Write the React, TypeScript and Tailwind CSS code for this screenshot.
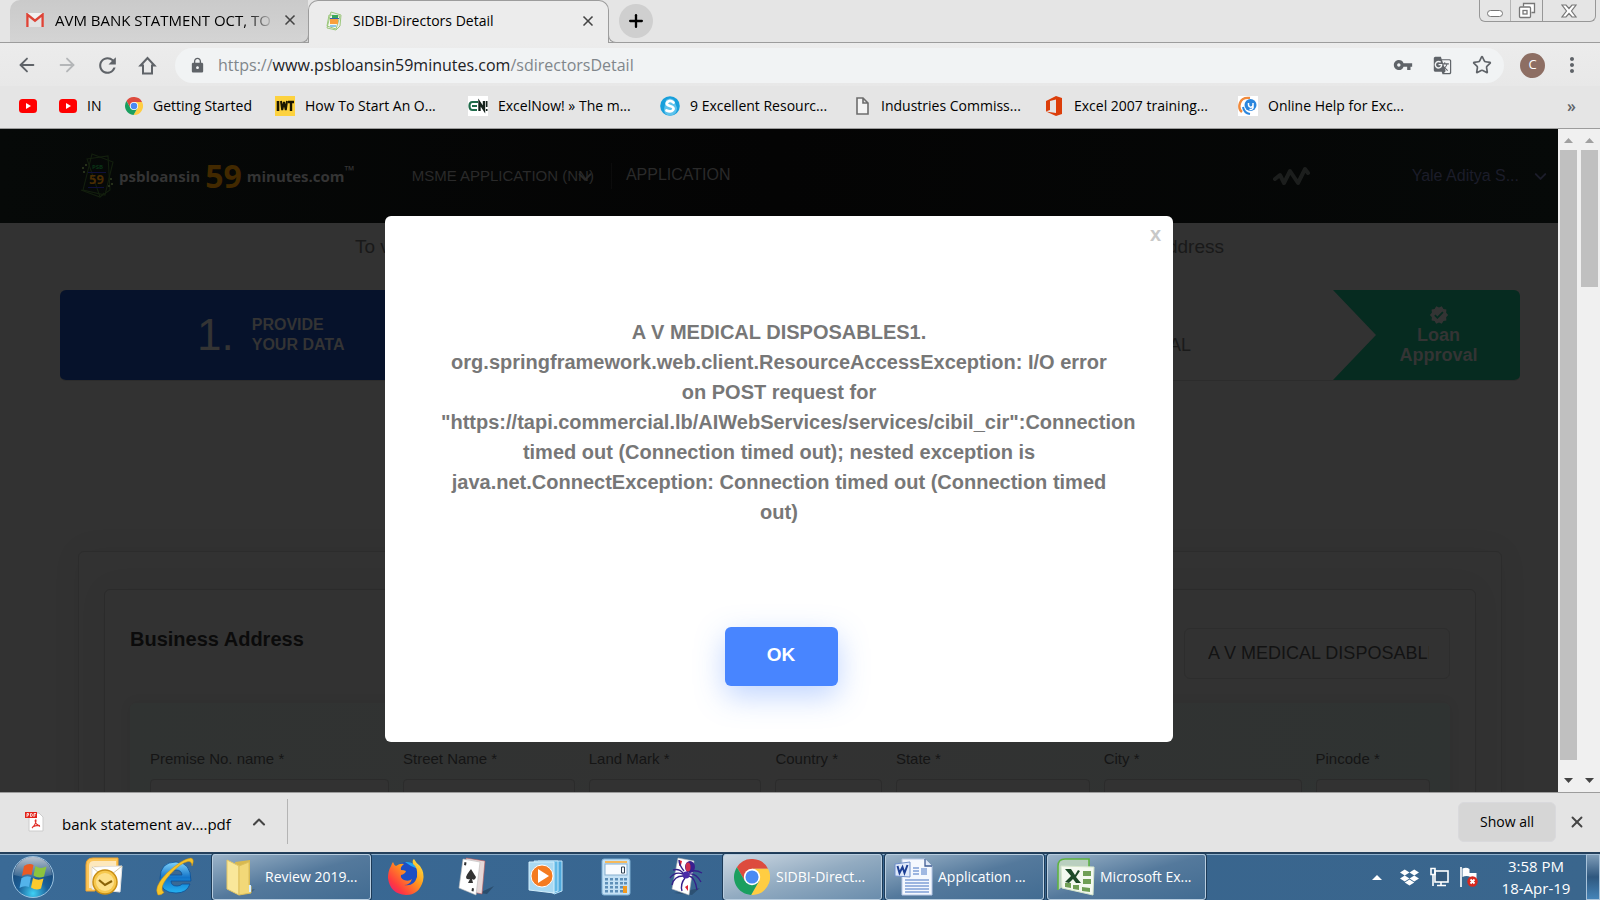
import React, { useState } from "react";
import { X, Plus, ArrowLeft, ArrowRight, ChevronDown, ChevronUp, Star } from "lucide-react";
import { MdVpnKey, MdLock, MdMoreVert, MdRefresh, MdGTranslate, MdVerified } from "react-icons/md";
import { FaDropbox } from "react-icons/fa";

const ui = "font-['Open_Sans','Noto_Sans',sans-serif]";
const arial = "font-['Liberation_Sans',Arial,sans-serif]";

function ChromeLogo({ size }: { size: number }) {
  return (
    <svg width={size} height={size} viewBox="2 2 44 44" aria-hidden="true">
      <path fill="#dd4b3e" d="M24 14H43.6A22 22 0 0 0 5.54 12.03L15.34 29Z" />
      <path fill="#ffcd42" d="M32.66 29L22.86 45.97A22 22 0 0 0 43.6 14H24Z" />
      <path fill="#1a9f5f" d="M15.34 29L5.54 12.03A22 22 0 0 0 22.86 45.97L32.66 29Z" />
      <circle cx="24" cy="24" r="10" fill="#fff" />
      <circle cx="24" cy="24" r="8" fill="#4a8af4" />
    </svg>
  );
}

function YouTubeIcon() {
  return (
    <svg width="18" height="18" viewBox="0 0 18 18" aria-hidden="true">
      <rect y="2" width="18" height="14" rx="3.5" fill="#f00" />
      <path d="M7 6l5 3-5 3z" fill="#fff" />
    </svg>
  );
}

function GmailIcon() {
  return (
    <svg width="18" height="14" viewBox="0 0 18 14" aria-hidden="true">
      <rect width="18" height="14" rx="1.5" fill="#f1f1f1" />
      <path d="M3 14V4l6 5 6-5v10" fill="#e3e3e3" />
      <path d="M1.4 14V1.6L9 7.6l7.6-6V14" fill="none" stroke="#dc4437" strokeWidth="2.4" />
    </svg>
  );
}

function PsbIcon() {
  return (
    <svg width="18" height="20" viewBox="0 0 18 20" aria-hidden="true">
      <path d="M4 4l11 1-4 13-9-3z" fill="#f4f8ee" stroke="#9cc77c" />
      <path d="M6 1l10 3-1 11-4 4-9-2z" fill="none" stroke="#9cc77c" />
      <rect x="7" y="4" width="6" height="3" fill="#3aa65a" />
      <rect x="5" y="8" width="8" height="5" fill="#f9a03c" />
      <rect x="5" y="7" width="9" height="1" fill="#3a5fa8" />
      <rect x="5" y="14" width="6" height="2" fill="#8fc4e6" />
    </svg>
  );
}

function IwtIcon() {
  return (
    <svg width="20" height="20" viewBox="0 0 20 20" aria-hidden="true">
      <rect width="20" height="20" fill="#fdd23e" />
      <path d="M3 5v10" stroke="#1b1600" strokeWidth="2.600" />
      <path d="M6 5l1.200 9L9 6l1.800 8L12 5" fill="none" stroke="#1b1600" strokeWidth="2" />
      <path d="M13 6h6M16 6v9" stroke="#1b1600" strokeWidth="2.400" />
    </svg>
  );
}

function ExcelNowIcon() {
  return (
    <svg width="20" height="20" viewBox="0 0 20 20" aria-hidden="true">
      <rect width="20" height="20" fill="#fff" />
      <path d="M10 6H4.500Q1.500 6 1.500 10t3 4H9M4 10h5" fill="none" stroke="#1f6b4a" strokeWidth="2.200" />
      <path d="M11.500 15V6.500l4.500 7V5" fill="none" stroke="#15221c" strokeWidth="2.400" />
      <path d="M18.700 5v6M18.700 13v2" fill="none" stroke="#15221c" strokeWidth="1.600" />
    </svg>
  );
}

function SkypeLikeIcon() {
  return (
    <svg width="20" height="20" viewBox="0 0 20 20" aria-hidden="true">
      <circle cx="10" cy="10" r="9.800" fill="#189fdb" />
      <path d="M4 13q0 6 6 6.800Q17 19 17 12l-3-8q-4-3-8 0z" fill="#5dc2ec" />
      <path d="M13.500 6.500Q10 3.500 7.500 6t2.500 4 3 4-6.500.5" fill="none" stroke="#fff" strokeWidth="2.800" strokeLinecap="round" />
    </svg>
  );
}

function PageIcon() {
  return (
    <svg width="18" height="20" viewBox="0 0 18 20" aria-hidden="true">
      <path d="M4 2h6l5 5v11H4zM10 2v5h5" fill="#f4f4f4" stroke="#6d6d6d" strokeWidth="1.600" />
    </svg>
  );
}

function OfficeIcon() {
  return (
    <svg width="18" height="20" viewBox="0 0 18 20" aria-hidden="true">
      <path d="M0 5L10 0l6 2v16l-6 2L0 15.500l10 1.500V3.500L4 5v9l-4 1.500z" fill="#dc3e0a" />
    </svg>
  );
}

function HelpIcon() {
  return (
    <svg width="20" height="20" viewBox="0 0 20 20" aria-hidden="true">
      <rect width="20" height="20" fill="#fff" />
      <path d="M12 2Q4 1 2 7t2 9" fill="none" stroke="#f08a3c" strokeWidth="2.400" />
      <circle cx="12.500" cy="9" r="6" fill="#2b86dd" />
      <path d="M10.500 7v2q.5 2.500 2.500 2.200T15 9V7M15 9v3q-1 2-3.500 1.500" fill="none" stroke="#fff" strokeWidth="1.500" />
      <path d="M5 11q1 6 7 7" fill="none" stroke="#2b86dd" strokeWidth="2" />
    </svg>
  );
}

const bookmarks = [
  { label: "", name: "YouTube", width: "w-10", icon: <YouTubeIcon /> },
  { label: "IN", name: "YouTube IN", width: "w-[66px]", icon: <YouTubeIcon /> },
  { label: "Getting Started", name: "Getting Started", width: "w-[150px]", icon: <ChromeLogo size={18} /> },
  { label: "How To Start An O...", name: "How To Start", width: "w-[193px]", icon: <IwtIcon /> },
  { label: "ExcelNow! » The m...", name: "ExcelNow", width: "w-48", icon: <ExcelNowIcon /> },
  { label: "9 Excellent Resourc...", name: "9 Excellent", width: "w-[193px]", icon: <SkypeLikeIcon /> },
  { label: "Industries Commiss...", name: "Industries", width: "w-[193px]", icon: <PageIcon /> },
  { label: "Excel 2007 training...", name: "Excel 2007", width: "w-48", icon: <OfficeIcon /> },
  { label: "Online Help for Exc...", name: "Online Help", width: "w-48", icon: <HelpIcon /> },
];

function TabStrip() {
  return (
    <div className="flex h-[43px] shrink-0 items-end border-b border-[#9c9c9c] bg-[#e5e5e5] pl-2.5">
      <div role="tab" aria-selected="false" className="flex h-[42px] w-[298px] items-center rounded-tl-[10px] bg-linear-to-b from-[#cacaca] to-[#d4d4d4] pb-0.5 pl-4 pr-2.5">
        <GmailIcon />
        <span className="ml-[11px] w-[219px] overflow-hidden whitespace-nowrap bg-linear-to-r from-black from-85% to-[#cfcfcf] bg-clip-text text-[15px] text-transparent">
          AVM BANK STATMENT OCT, TO DEC
        </span>
        <button aria-label="Close tab" className="ml-auto text-[#444]">
          <X size={16} strokeWidth={2.5} />
        </button>
      </div>
      <div role="tab" aria-selected="true" className="relative -mb-px flex h-[43px] w-[301px] items-center rounded-t-[10px] border border-b-0 border-[#9c9c9c] bg-[#ececec] pb-0.5 pl-4 pr-3">
        <span className="absolute -left-2 bottom-0 size-2 rounded-br-lg border-b border-r border-[#9c9c9c] bg-[#d4d4d4]" />
        <span className="absolute -right-2 bottom-0 size-2 rounded-bl-lg border-b border-l border-[#9c9c9c] bg-[#e5e5e5]" />
        <PsbIcon />
        <span className="ml-[10px] whitespace-nowrap text-sm text-black">SIDBI-Directors Detail</span>
        <button aria-label="Close tab" className="ml-auto text-[#444]">
          <X size={16} strokeWidth={2.5} />
        </button>
      </div>
      <button aria-label="New tab" className="mb-1 ml-2.5 flex size-[34px] items-center justify-center rounded-full bg-[#cfcfcf] text-black">
        <Plus size={20} strokeWidth={2.8} />
      </button>
      <div className="ml-auto mr-1 flex h-[22px] self-start rounded-b-md border border-t-0 border-[#979797]">
        <button aria-label="Minimize" className="flex w-[31px] items-end justify-center border-r border-[#b5b5b5] pb-1">
          <span className="h-[7px] w-4 rounded-sm border border-[#777] bg-white" />
        </button>
        <button aria-label="Restore" className="flex w-8 items-center justify-center border-r border-[#979797]">
          <svg width="18" height="17" viewBox="0 0 18 17" aria-hidden="true" fill="none" stroke="#777" strokeWidth="1.300">
            <path d="M5.500 4.500v-3h11v9h-3" fill="#fff" />
            <rect x="1.500" y="5" width="11" height="10.500" rx="1" fill="#fff" />
            <rect x="5" y="8.500" width="4" height="3.500" />
          </svg>
        </button>
        <button aria-label="Close window" className="flex w-[52px] items-center justify-center">
          <svg width="16" height="14" viewBox="0 0 16 14" aria-hidden="true">
            <path d="M1 1h4l3 3.500L11 1h4l-4.500 6L15 13h-4L8 9.500 5 13H1l4.500-6z" fill="#fff" stroke="#777" strokeWidth="1.200" />
          </svg>
        </button>
      </div>
    </div>
  );
}

function Toolbar() {
  return (
    <div className="flex h-[43px] shrink-0 items-center bg-linear-to-b from-[#ececec] to-[#e8e8e8] px-4 pt-px text-[#5f6368]">
      <button aria-label="Back"><ArrowLeft size={22} /></button>
      <button aria-label="Forward" className="ml-[18px] text-[#b4b6b8]"><ArrowRight size={22} /></button>
      <button aria-label="Reload" className="ml-[17px]"><MdRefresh size={25} /></button>
      <button aria-label="Home" className="ml-[15px]">
        <svg width="25" height="25" viewBox="0 0 25 25" fill="none" stroke="currentColor" strokeWidth="2" aria-hidden="true">
          <path d="M5.500 12.500L12.500 5l7 7.500H17V20.500H8V12.500z" />
        </svg>
      </button>
      <div className="ml-[15px] flex h-[35px] flex-1 items-center rounded-full bg-[#f1f3f4] pl-3.5 pr-3">
        <MdLock size={17} />
        <div className="ml-3 flex-1 whitespace-nowrap text-base text-[#80868b]">
          https://<span className="text-[#202124]">www.psbloansin59minutes.com</span>/sdirectorsDetail
        </div>
        <button aria-label="Saved passwords"><MdVpnKey size={20} /></button>
        <button aria-label="Translate" className="ml-5"><MdGTranslate size={19} /></button>
        <button aria-label="Bookmark this page" className="ml-5"><Star size={20} /></button>
      </div>
      <button aria-label="Profile" className="ml-4 flex size-[25px] items-center justify-center rounded-full bg-[#8d6e63] text-[13px] text-white">C</button>
      <button aria-label="Menu" className="ml-[15px]"><MdMoreVert size={24} /></button>
    </div>
  );
}

function BookmarksBar() {
  return (
    <nav className="flex h-[43px] shrink-0 items-center border-b border-[#9c9c9c] bg-[#e5e5e5] pb-0.5 pl-[19px] pr-6 text-black">
      {bookmarks.map((b) => (
        <a key={b.name} href="#" aria-label={b.name} className={`flex shrink-0 items-center gap-2.5 whitespace-nowrap text-sm ${b.width}`}>
          {b.icon}
          {b.label}
        </a>
      ))}
      <button aria-label="More bookmarks" className="ml-auto text-base font-semibold leading-none text-[#5f6368]">»</button>
    </nav>
  );
}

function SiteLogo() {
  return (
    <div className="flex items-center font-bold text-[#343434]">
      <svg width="36" height="46" viewBox="0 0 36 46" aria-hidden="true">
        <g fill="none" stroke="#131f0e" strokeWidth="1.100">
          <path d="M12 1l21 8-8 33-22-5z" />
          <path d="M7 6l21-3 2 34-10 7z" />
          <path d="M1 37l19 7 4-4" />
        </g>
        <path d="M2 14h2v2H2zM5 11h2v2H5zM3 18h2v2H3zM30 25h2v2h-2zM31 30h2v2h-2zM28 32h2v2h-2z" fill="#26301a" />
        <rect x="8" y="19" width="18" height="1" fill="#10103a" />
        <rect x="8" y="34" width="16" height="1" fill="#10103a" />
        <text x="12" y="16" fontSize="6" fill="#0a3416" fontWeight="700">PSB</text>
        <text x="9" y="31" fontSize="13" fill="#4a2d02" fontWeight="700">59</text>
      </svg>
      <span className="ml-[3px] text-[15px]">psbloansin</span>
      <span className="ml-[5px] text-[32px] leading-none text-[#422900]">59</span>
      <span className="ml-[5px] text-[15px]">minutes.com</span>
      <span className="mb-3 text-[13px] leading-none">™</span>
    </div>
  );
}

function SiteHeader() {
  return (
    <header className="flex h-[94px] items-center bg-linear-to-r from-[#060908] via-[#040404] to-[#060908] pl-20 pr-2">
      <SiteLogo />
      <nav className={`ml-[57px] flex items-center whitespace-nowrap text-base text-[#2a2a2a] ${arial}`}>
        <a href="#" className="relative">
          <span className="text-[15px]">MSME APPLICATION (NN)</span>
          <ChevronDown size={22} className="absolute -right-0.5 top-0.5" />
        </a>
        <a href="#" className="ml-[17px] border-l border-[#0c0c0c] pb-0.5 pl-3.5">APPLICATION</a>
      </nav>
      <svg className="ml-auto" width="38" height="22" viewBox="0 0 38 22" fill="none" stroke="#1c1e1d" strokeWidth="4" strokeLinecap="round" strokeLinejoin="round" aria-hidden="true">
        <path d="M3 14l5-4 4 8 6-12 8 12 7-14 3 4" />
      </svg>
      <button className={`ml-[102px] flex items-center gap-3 whitespace-nowrap text-base text-[#1c1d2a] ${arial}`}>
        Yale Aditya S... <ChevronDown size={19} strokeWidth={2.500} />
      </button>
    </header>
  );
}

function Steps() {
  return (
    <section className="ml-[60px] mr-[38px] flex h-[91px] overflow-hidden rounded-md border-b border-[#2c2c2c] bg-[#323232]">
      <div className="flex w-1/3 items-center bg-[#06122b] pl-[137px] text-[#343434]">
        <span className="text-[44px] leading-none">1.</span>
        <span className="ml-[18px] text-base font-bold leading-5">PROVIDE<br />YOUR DATA</span>
      </div>
      <div className="flex flex-1 items-center justify-end pr-[142px] pt-5 text-lg text-[#1a1a1a]">APPROVAL</div>
      <div className="flex w-[187px] flex-col items-center justify-center bg-[#062b20] pl-6 text-lg font-bold leading-5 text-[#343434] [clip-path:polygon(0_0,100%_0,100%_100%,0_100%,43px_50%)]">
        <MdVerified size={20} />
        <span className="text-center">Loan<br />Approval</span>
      </div>
    </section>
  );
}

const fields = ["Premise No. name *", "Street Name *", "Land Mark *", "Country *", "State *", "City *", "Pincode *"];

function AddressForm() {
  return (
    <section className="ml-[78px] mr-14 mt-[170px] rounded-md border border-[#2c2c2c] px-[25px] pt-[37px] shadow-[0_0_30px_rgba(0,0,0,0.06)]">
      <div className="rounded-md border border-[#2b2b2b] px-[25px] pt-[37px] shadow-[0_0_30px_rgba(0,0,0,0.05)]">
        <div className="flex items-start justify-between">
          <h2 className="text-xl font-bold leading-6 text-[#0b0b0b]">Business Address</h2>
          <input aria-label="Business name" defaultValue="A V MEDICAL DISPOSABLES" className="mt-px h-[51px] w-[266px] rounded-md border border-[#2d2d2d] bg-transparent pl-[23px] pr-5 text-lg text-[#131313]" />
        </div>
        <div className="mt-6 grid h-40 grid-cols-[238fr_171fr_172fr_106fr_193fr_197fr_114fr] gap-3.5 rounded-md bg-linear-to-r from-[#303332] via-[#323232] to-[#2f3332] px-5 pt-[46px] shadow-[0_0_12px_rgba(0,0,0,0.08)]">
          {fields.map((f, i) => (
            <div key={f} className="flex min-w-0 flex-col">
              <label htmlFor={`field-${i}`} className="whitespace-nowrap text-[15px] leading-5 text-[#151515]">{f}</label>
              <input id={`field-${i}`} className="mt-2.5 h-10 w-full rounded border border-[#2b2b2b] bg-[#323232]" />
            </div>
          ))}
        </div>
      </div>
    </section>
  );
}

function ErrorDialog({ onClose }: { onClose: () => void }) {
  return (
    <div className="absolute inset-0 flex items-start justify-center pt-[87px]">
      <div role="alertdialog" aria-label="Error" className="relative w-[788px] rounded-md bg-white px-14 pb-14 pt-[101px] text-center">
        <button onClick={onClose} aria-label="Close" className="absolute right-3 top-2 text-xl font-bold leading-5 text-[#c8c8c8]">x</button>
        <p className="text-xl font-bold leading-[30px] text-[#777]">
          A V MEDICAL DISPOSABLES1. org.springframework.web.client.ResourceAccessException: I/O error on POST request for "https://tapi.commercial.lb/AIWebServices/services/cibil_cir":Connection timed out (Connection timed out); nested exception is java.net.ConnectException: Connection timed out (Connection timed out)
        </p>
        <button onClick={onClose} className="ml-1 mt-[100px] h-[59px] w-[113px] rounded-md bg-[#4885ff] pb-0.5 text-[19px] font-bold text-white shadow-[0_10px_30px_rgba(72,133,255,0.35)]">OK</button>
      </div>
    </div>
  );
}

function Scrollbar({ children }: { children: React.ReactNode }) {
  return (
    <div className="flex w-[21px] flex-col items-center">
      <svg className="mt-2 h-[13px] shrink-0" width="9" viewBox="0 0 9 13" aria-hidden="true"><path d="M0 6l4.500-5L9 6z" fill="#a0a0a0" /></svg>
      <div className="w-[17px] flex-1">{children}</div>
      <svg className="h-8 shrink-0" width="9" viewBox="0 0 9 32" aria-hidden="true"><path d="M0 18h9l-4.500 5z" fill="#444" /></svg>
    </div>
  );
}

function DownloadBar() {
  return (
    <div className="flex h-[60px] shrink-0 items-center border-t border-[#9c9c9c] bg-[#e4e4e4] pb-0.5 pl-6 pr-3.5 text-black">
      <div className="flex h-[45px] w-[264px] items-center border-r border-[#b4b4b4]">
        <svg width="20" height="20" viewBox="0 0 20 20" aria-hidden="true">
          <path d="M5 1h10l4 4v14H5z" fill="#fff" stroke="#ccc" />
          <rect x="1" width="12" height="6" fill="#e2231a" />
          <path d="M3 5V1.500h1.500v1.700H3M6.500 1.500v3h1.200l.8-1.500-.8-1.500zM10 5V1.500h2M10 3h1.500" fill="none" stroke="#fff" strokeWidth=".8" />
          <path d="M8 16q4-4 4-7.500 0-1.500-.8 0Q11 12 16 14.500M8.500 15q3-2 7.500-1.500" fill="none" stroke="#e0322b" strokeWidth="1.100" />
        </svg>
        <span className="ml-[18px] mt-1.5 whitespace-nowrap text-[15px]">bank statement av....pdf</span>
        <button aria-label="Download options" className="ml-[18px] text-[#444]"><ChevronUp size={20} strokeWidth={2.500} /></button>
      </div>
      <button className="ml-auto h-10 w-[98px] rounded-md border border-[#d9d9dc] bg-[#d6d6d6] text-sm">Show all</button>
      <button aria-label="Close downloads" className="ml-3 text-[#444]"><X size={18} strokeWidth={2.500} /></button>
    </div>
  );
}

function StartOrb() {
  return (
    <svg width="44" height="44" viewBox="0 0 44 44" aria-hidden="true">
      <defs>
        <radialGradient id="orb" cx=".5" cy=".9" r=".9">
          <stop offset="0" stopColor="#3fd0f5" /><stop offset=".4" stopColor="#1b5f98" /><stop offset="1" stopColor="#163a63" />
        </radialGradient>
        <linearGradient id="orbShine" x2="0" y2="1"><stop offset="0" stopColor="#fff" stopOpacity=".7" /><stop offset="1" stopColor="#fff" stopOpacity=".1" /></linearGradient>
      </defs>
      <circle cx="22" cy="22" r="20.500" fill="url(#orb)" stroke="#9cc3e0" />
      <path d="M3 20a19 18 0 0 1 38 0q-19 6-38 0z" fill="url(#orbShine)" />
      <path d="M13 11q5-3.500 9.500-1l-2 10q-5-2-9.500 1z" fill="#ea5a24" />
      <path d="M24.500 11q5 3.500 11 .500l-2.500 10q-5 2.500-10.500-1z" fill="#8cc43e" />
      <path d="M10.500 23q5-3 9.500-1l-2 10q-5-2-9.500 1z" fill="#53b3ea" />
      <path d="M22 23q5 3 10.500.500l-2.500 10q-5 2.500-10-1z" fill="#fcca2d" />
    </svg>
  );
}

function OutlookIcon() {
  return (
    <svg width="38" height="38" viewBox="0 0 38 38" aria-hidden="true">
      <path d="M1 8q0-7 7-7h25v9H10v24H1z" fill="#fbc65a" stroke="#f1a42c" />
      <path d="M4 9q0-5 5-5h22v5H9v22H4z" fill="#fff" opacity=".6" />
      <path d="M7 10l30-1-2 26-28-3z" fill="#fff" stroke="#e3e3e3" />
      <path d="M7 10l14 12L37 9" fill="none" stroke="#d8c9a0" />
      <circle cx="20" cy="25" r="12" fill="#f6c84e" stroke="#c98f14" strokeWidth="1.500" />
      <circle cx="20" cy="25" r="9" fill="#fde08a" />
      <path d="M14 23l6 5 7-4" fill="none" stroke="#8a6208" strokeWidth="2.200" />
    </svg>
  );
}

function ExplorerIcon() {
  return (
    <svg width="40" height="40" viewBox="0 0 40 40" aria-hidden="true">
      <defs><linearGradient id="ie" x2="0" y2="1"><stop offset="0" stopColor="#7fd3fb" /><stop offset=".5" stopColor="#1273c8" /><stop offset="1" stopColor="#25b3f2" /></linearGradient></defs>
      <path d="M37 24H17q0 5 6 5 3.500 0 5-2h8Q33 36 22 36 6 36 6 21.500 6 5 22 5q15 0 15 19zM16 18h12q-.5-5-6-5t-6 5z" fill="url(#ie)" stroke="#0d4f94" strokeWidth=".8" />
      <path d="M4 38Q-1 30 13 16 28 2 37 1q4 1 1 8 0-5-4-4.500-7 1-18 13Q4 31 10 35.500q-3 3-6 2.500z" fill="#f6c429" stroke="#c98f14" strokeWidth=".5" />
    </svg>
  );
}

function FolderIcon() {
  return (
    <svg width="30" height="38" viewBox="0 0 30 38" aria-hidden="true">
      <path d="M17 33l12-2-4 4-10 2z" fill="#000" opacity=".2" />
      <path d="M9 4l15-2v30l-10 1z" fill="#d9b94e" />
      <path d="M1 2l12 6v29L1 31z" fill="#f9e79a" stroke="#e4c766" />
      <path d="M13 8l10-4v23l2 1v7l-12 2z" fill="#f2d878" stroke="#dcbf5c" />
      <path d="M23 27h2v7h-2z" fill="#d9efff" />
    </svg>
  );
}

function FirefoxIcon() {
  return (
    <svg width="38" height="38" viewBox="0 0 38 38" aria-hidden="true">
      <defs><linearGradient id="fx" x1="1" x2="0" y2="1"><stop offset="0" stopColor="#fff14a" /><stop offset=".4" stopColor="#ff9a1c" /><stop offset=".75" stopColor="#ff3b3f" /><stop offset="1" stopColor="#e3128a" /></linearGradient></defs>
      <circle cx="20" cy="18" r="14" fill="#1d4fc4" />
      <path d="M18 4q9-1 13 7l-7-3z" fill="#22a7f2" />
      <path d="M4 8q1-3 2-4 1 3 3 4 4-3 8-2-4 3-3 6 3 0 5 1-1 3-5 4-1 3 3 5 5 2 8-1-2 6-8 6 10 2 13-8Q31 9 26 6q-1-4 1-5 2 4 6 7 5 7 3 15-4 14-17 14Q3 36 1 20 1 13 4 8z" fill="url(#fx)" />
    </svg>
  );
}

function SolitaireIcon() {
  return (
    <svg width="38" height="40" viewBox="0 0 38 40" aria-hidden="true">
      <path d="M22 36l15-7-7 8z" fill="#000" opacity=".25" />
      <path d="M9 1l19 3-3 33-14-3z" fill="#e6d8d8" stroke="#b55" strokeWidth=".6" />
      <path d="M6 2l17 3-4 33L2 31z" fill="#fff" stroke="#bbb" strokeWidth=".6" />
      <path d="M14 12q3 5 5 8-1 4-4 2l1 4h-5l2-4q-4 1-4-2 1-3 5-8z" fill="#333" />
      <path d="M7.500 5l2 .500-.500 3-2-.500zM15 31l2 .500-.500 3-2-.500z" fill="#333" />
    </svg>
  );
}

function SpiderIcon() {
  return (
    <svg width="36" height="40" viewBox="0 0 36 40" aria-hidden="true">
      <path d="M6 36l26-5-8 7z" fill="#000" opacity=".2" />
      <path d="M10 1l16 3-5 34-17-6z" fill="#fff" stroke="#bbb" strokeWidth=".6" />
      <path d="M11 3l3 1-1 4-2 1zM17 30l3-2v6z" fill="#d23" />
      <ellipse cx="22" cy="10" rx="5" ry="6" fill="#3a1f8f" />
      <ellipse cx="20" cy="10" rx="2.500" ry="4.500" fill="#d0304f" />
      <circle cx="18" cy="18" r="3.500" fill="#4a2aa8" />
      <path d="M15 17Q7 14 2 21M15 19Q6 19 4 28M17 21q-5 6-3 13M21 19q6 1 8 14M21 17q7-1 12 8M21 15q6-3 13 1M15 16Q11 11 5 13M16 14Q11 8 11 3" fill="none" stroke="#35208a" strokeWidth="1.400" />
    </svg>
  );
}

function MediaIcon() {
  return (
    <svg width="36" height="36" viewBox="0 0 36 36" aria-hidden="true">
      <path d="M10 2h24v30l-8 3-2-3z" fill="#4da8dc" stroke="#bfe5fa" />
      <path d="M6 2h24v30l-6 2z" fill="#62b9e6" stroke="#bfe5fa" />
      <path d="M1 3h25v31L1 31z" fill="#a9d9f2" stroke="#d4effc" />
      <circle cx="14" cy="17" r="11" fill="#f47b20" stroke="#fff" />
      <path d="M10 10l11 7-11 7z" fill="#fff" />
    </svg>
  );
}

function CalculatorIcon() {
  return (
    <svg width="30" height="38" viewBox="0 0 30 38" aria-hidden="true">
      <rect x="1" y="1" width="28" height="36" rx="2" fill="#c4e1f5" stroke="#7fb0d4" />
      <rect x="4" y="3" width="22" height="2" fill="#f5b95b" />
      <rect x="4" y="6" width="22" height="11" fill="#f7fbff" stroke="#86afcf" />
      <path d="M20.500 9h3v6h-3z" fill="none" stroke="#345" />
      {[20, 24, 28, 32].map((y) => [4, 9, 14, 19, 23].map((x) => <rect key={`${x}-${y}`} x={x} y={y} width="3" height="2.500" fill="#5d8fb8" />))}
      <rect x="22" y="28" width="4" height="7" fill="#f39a1e" />
    </svg>
  );
}

function WordIcon() {
  return (
    <svg width="40" height="38" viewBox="0 0 40 38" aria-hidden="true">
      <path d="M8 1h23l7 7v29H8z" fill="#f4f8fe" stroke="#b7c8e6" />
      <path d="M31 1v7h7" fill="#dfe8f7" stroke="#3f5c94" strokeWidth="1.300" />
      <path d="M19 10h6M19 13h6M19 16h6M11 22h24M11 25h24M11 28h24M11 31h24M11 34h24" stroke="#7f9ed6" strokeWidth="1.300" />
      <rect x="27" y="10" width="6" height="7" fill="#9fb8e2" />
      <path d="M1 6l15-2v15L1 18z" fill="#dfe9fa" stroke="#6f8fc9" />
      <path d="M3.500 8l2 7 3-6 2 6 3-8" fill="none" stroke="#1c3f94" strokeWidth="2" />
    </svg>
  );
}

function ExcelIcon() {
  return (
    <svg width="38" height="38" viewBox="0 0 38 38" aria-hidden="true">
      <path d="M1 32V8q0-7 7-7h24v9" fill="#b9cfbf" stroke="#5eb342" strokeWidth="1.600" />
      <path d="M4 8l33 1-1 28-31-7z" fill="#f4f9f0" stroke="#d5e6cb" />
      <path d="M26 13h8v5h-8zM26 21h8v5h-8zM25 29l8 1v4l-8-1zM16 27h6v5l-6-1zM8 25h6v5l-6-1z" fill="#6f9f55" />
      <path d="M8 11h6l4 6 3-5 2 1-4 6 5 6h-5l-3-4-4 4-4-1 6-6z" fill="#1d4a28" />
    </svg>
  );
}

function TaskButton({ label, active, children }: { label: string; active?: boolean; children: React.ReactNode }) {
  const tone = active ? "from-[#cdd8e2] via-[#92abc1] to-[#6a8dac]" : "from-[#9bb3c8] via-[#54799c] to-[#426c92]";
  return (
    <button className={`flex h-[46px] w-[159px] shrink-0 items-center rounded-[3px] border border-[#b8cddf] bg-linear-to-br ${tone} pl-2 text-white ring-1 ring-[#1c3a57]`}>
      <span className="flex w-10 justify-center">{children}</span>
      <span className="ml-1 flex-1 whitespace-nowrap text-left text-sm">{label}</span>
    </button>
  );
}

function Launcher({ name, children }: { name: string; children: React.ReactNode }) {
  return <button aria-label={name} className="flex w-[70px] shrink-0 justify-center">{children}</button>;
}

function Taskbar() {
  return (
    <footer className="flex h-12 shrink-0 items-center border-t-2 border-[#24405c] bg-linear-to-r from-[#3a6a96] via-[#38658f] to-[#3a668d] text-white shadow-[inset_0_1px_0_#8fb0cc]">
      <button aria-label="Start" className="ml-[11px] shrink-0"><StartOrb /></button>
      <div className="ml-3.5 flex shrink-0">
        <Launcher name="Outlook"><OutlookIcon /></Launcher>
        <Launcher name="Internet Explorer"><ExplorerIcon /></Launcher>
      </div>
      <div className="ml-[3px] flex shrink-0"><TaskButton label="Review 2019..."><FolderIcon /></TaskButton></div>
      <div className="flex shrink-0 items-center">
        <Launcher name="Firefox"><FirefoxIcon /></Launcher>
        <Launcher name="Solitaire"><SolitaireIcon /></Launcher>
        <Launcher name="Media Player"><MediaIcon /></Launcher>
        <Launcher name="Calculator"><CalculatorIcon /></Launcher>
        <Launcher name="Spider Solitaire"><SpiderIcon /></Launcher>
      </div>
      <div className="ml-0.5 flex shrink-0 gap-[3px]">
        <TaskButton label="SIDBI-Direct..." active><ChromeLogo size={36} /></TaskButton>
        <TaskButton label="Application ..."><WordIcon /></TaskButton>
        <TaskButton label="Microsoft Ex..."><ExcelIcon /></TaskButton>
      </div>
      <div className="ml-auto flex h-full shrink-0 items-center">
        <svg width="10" height="6" viewBox="0 0 10 6" aria-hidden="true"><path d="M0 6l5-5 5 5z" fill="#fff" /></svg>
        <FaDropbox size={19} className="ml-[18px]" aria-label="Dropbox" />
        <svg className="ml-2.5" width="20" height="20" viewBox="0 0 20 20" aria-label="Network" fill="none" stroke="#fff" strokeWidth="1.600">
          <rect x="6" y="4" width="13" height="11" fill="#34597b" />
          <path d="M8 18.500h9M12 15v3" />
          <path d="M2 1.500h4v6H2zM4 8v11" />
        </svg>
        <svg className="ml-2.5" width="20" height="20" viewBox="0 0 20 20" aria-label="Action center">
          <path d="M2 0v20" stroke="#fff" strokeWidth="1.600" />
          <path d="M3.500 1.500q4-1.500 7 .500v4h7v6h-6v-2q-4-2-8 0z" fill="#fff" />
          <circle cx="13.500" cy="14.500" r="5.200" fill="#d8281e" />
          <path d="M11.500 12.500l4 4m0-4l-4 4" stroke="#fff" strokeWidth="1.800" />
        </svg>
        <div className="ml-[22px] w-[70px] whitespace-nowrap text-center text-[15px] leading-[22px]">3:58 PM<br />18-Apr-19</div>
        <button aria-label="Show desktop" className="ml-[15px] h-full w-[14px] border border-[#a9c3da] bg-linear-to-b from-[#7f9db8] via-[#2f587f] to-[#4584b8]" />
      </div>
    </footer>
  );
}

export default function App() {
  const [open, setOpen] = useState(true);
  return (
    <div className={`flex h-screen flex-col overflow-hidden bg-[#323232] ${ui}`}>
      <TabStrip />
      <Toolbar />
      <BookmarksBar />
      <div className="flex min-h-0 flex-1">
        <main className="relative min-w-0 flex-1 overflow-hidden bg-[#323232]">
          <SiteHeader />
          <div className={arial}>
            <p className="mx-auto flex h-[67px] w-[868px] justify-between pl-2.5 pt-[11px] text-[19px] leading-[26px] text-[#191919]">
              <span>To v</span>
              <span className="mr-[-11px]">address</span>
            </p>
            <Steps />
            <AddressForm />
            {open && <ErrorDialog onClose={() => setOpen(false)} />}
          </div>
        </main>
        <div className="flex bg-[#f0f0f0]" aria-hidden="true">
          <Scrollbar><div className="h-full bg-[#c0c0c0]" /></Scrollbar>
          <Scrollbar><div className="h-[137px] bg-[#c0c0c0]" /></Scrollbar>
        </div>
      </div>
      <DownloadBar />
      <Taskbar />
    </div>
  );
}
